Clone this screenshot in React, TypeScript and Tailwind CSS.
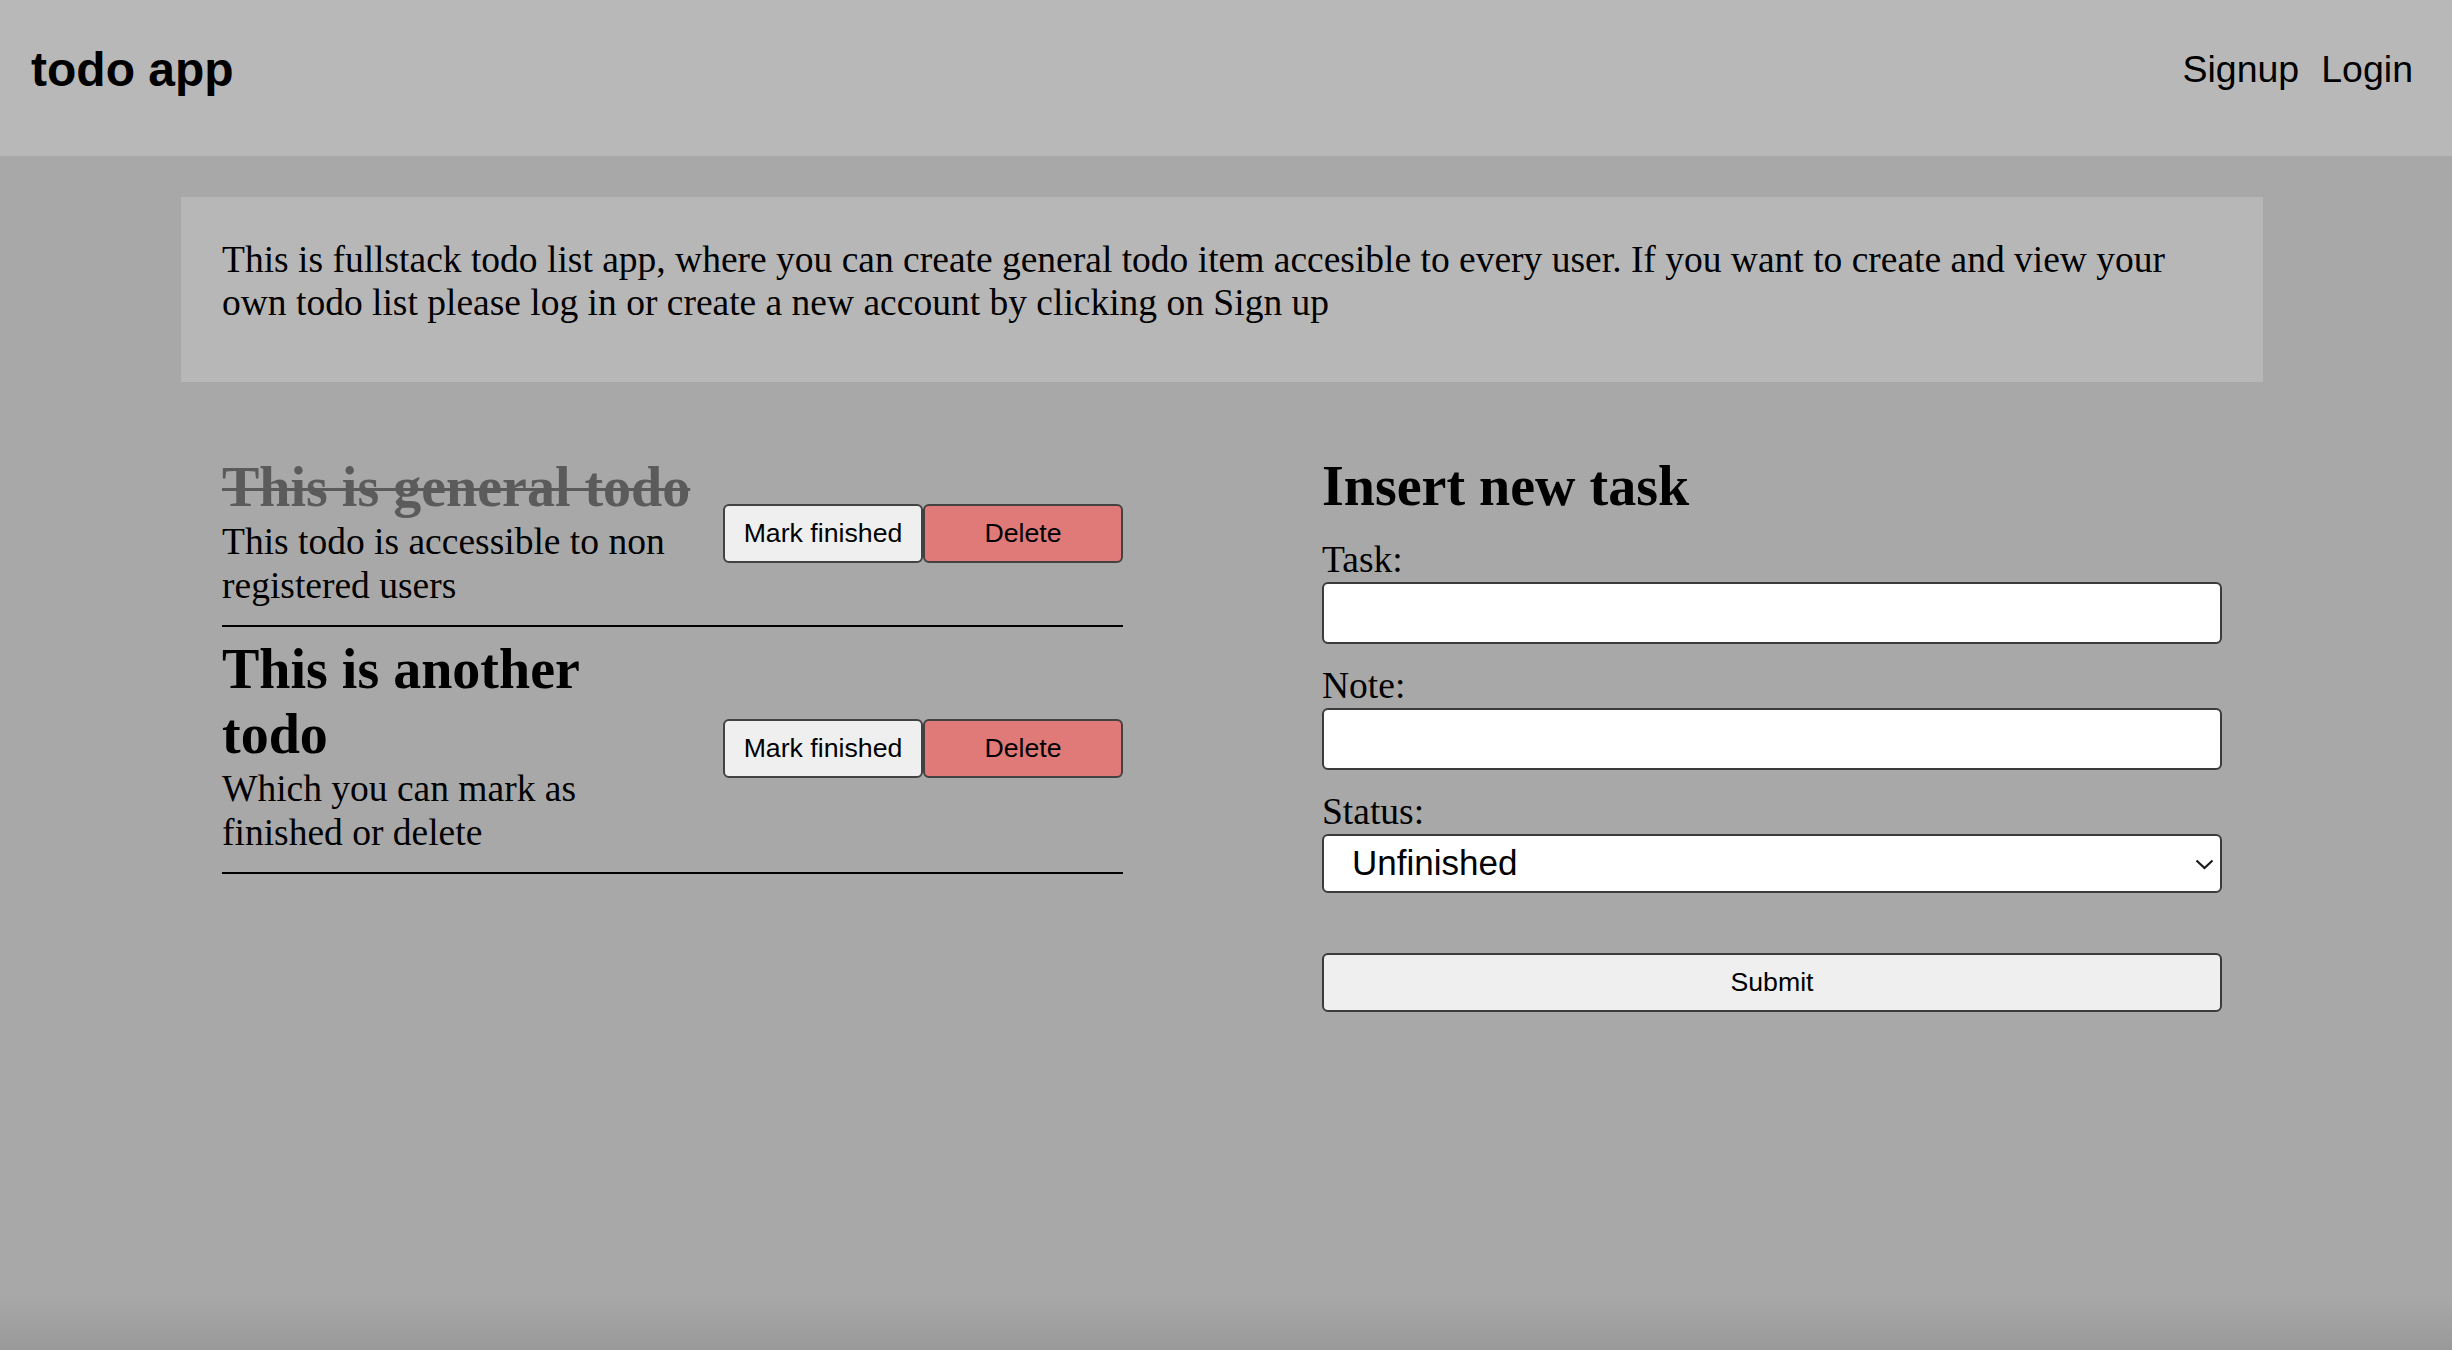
import React from "react";

const serif = "font-['Liberation_Serif',_'Times_New_Roman',_serif]";
const sans = "font-['Liberation_Sans',_Arial,_sans-serif]";

type Todo = { title: string; note: string; done: boolean };

const todos: Todo[] = [
  { title: "This is general todo", note: "This todo is accessible to non registered users", done: true },
  { title: "This is another todo", note: "Which you can mark as finished or delete", done: false },
];

function TodoItem({ todo }: { todo: Todo }) {
  return (
    <li className="flex items-center justify-between border-b-2 border-black pt-[10px] pb-[17px]">
      <div className="w-[473px]">
        <h3
          className={`${serif} text-[56px] font-bold leading-[65px] ${
            todo.done ? "text-[#5b5b5b] line-through decoration-[3px]" : "text-black"
          }`}
        >
          {todo.title}
        </h3>
        <p className={`${serif} text-[37.5px] leading-[44px] text-black`}>{todo.note}</p>
      </div>
      <div className={`${sans} mt-[4px] flex w-[400px] shrink-0`}>
        <button className="h-[59px] w-[200px] rounded-[6px] border-2 border-[#424242] bg-[#efefef] text-[26.7px] text-black">
          Mark finished
        </button>
        <button className="h-[59px] w-[200px] rounded-[6px] border-2 border-[#424242] bg-[#e07a78] text-[26.7px] text-black">
          Delete
        </button>
      </div>
    </li>
  );
}

export default function App() {
  return (
    <div className="min-h-screen bg-[linear-gradient(to_bottom,#a8a8a8_96%,#999999)]">
      <header className={`${sans} flex h-[156px] items-center justify-between bg-[#b8b8b8] pb-[18px] pl-[31px] pr-[39px] text-black`}>
        <h1 className="text-[48px] font-bold leading-[55px]">todo app</h1>
        <nav className="flex gap-[22px] text-[37.5px] leading-[44px]">
          <a>Signup</a>
          <a>Login</a>
        </nav>
      </header>

      <main className="ml-[181px] w-[2082px]">
        <section className="mt-[41px] h-[185px] bg-[#b7b7b7] px-[41px] pt-[41px]">
          <p className={`${serif} text-[37.5px] leading-[43px] text-black`}>
            This is fullstack todo list app, where you can create general todo item accesible to every user. If you
            want to create and view your own todo list please log in or create a new account by clicking on Sign up
          </p>
        </section>

        <div className="mt-[63px] flex items-start justify-between px-[41px]">
          <ul className="w-[901px]">
            {todos.map((t) => (
              <TodoItem key={t.title} todo={t} />
            ))}
          </ul>

          <form className="w-[900px] pt-[9px]" onSubmit={(e) => e.preventDefault()}>
            <h2 className={`${serif} mb-[19px] text-[56px] font-bold leading-[65px] text-black`}>Insert new task</h2>
            <label className={`${serif} block text-[37.5px] leading-[44px] text-black`}>Task:</label>
            <input className="mb-[20px] block h-[62px] w-full rounded-[6px] border-2 border-[#3b3b3b] bg-white" />
            <label className={`${serif} block text-[37.5px] leading-[44px] text-black`}>Note:</label>
            <input className="mb-[20px] block h-[62px] w-full rounded-[6px] border-2 border-[#3b3b3b] bg-white" />
            <label className={`${serif} block text-[37.5px] leading-[44px] text-black`}>Status:</label>
            <div className="relative">
              <select
                className={`${sans} block h-[59px] w-full appearance-none rounded-[6px] border-2 border-[#3b3b3b] bg-white pl-[28px] text-[35px] text-black`}
                defaultValue="unfinished"
              >
                <option value="unfinished">Unfinished</option>
                <option value="finished">Finished</option>
              </select>
              <svg
                className="pointer-events-none absolute right-[8px] top-[25px]"
                width="19"
                height="11"
                viewBox="0 0 19 11"
                fill="none"
              >
                <path d="M1.5 1.5 L9.5 9 L17.5 1.5" stroke="#1a1a1a" strokeWidth="2.2" />
              </svg>
            </div>
            <button
              type="submit"
              className={`${sans} mt-[60px] block h-[59px] w-full rounded-[6px] border-2 border-[#3b3b3b] bg-[#efefef] text-[26.7px] text-black`}
            >
              Submit
            </button>
          </form>
        </div>
      </main>
    </div>
  );
}
